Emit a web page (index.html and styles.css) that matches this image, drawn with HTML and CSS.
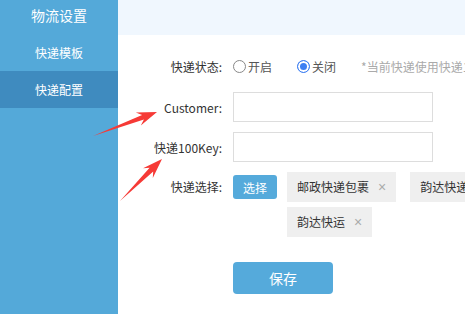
FILE: index.html
```html
<!DOCTYPE html>
<html lang="zh-CN">
<head>
    <meta charset="UTF-8">
    <meta name="viewport" content="width=device-width, initial-scale=1.0">
    <title>快递配置</title>
    <link rel="stylesheet" href="styles.css">
</head>
<body>

    <div class="page">
        <div class="sidebar">
            <div class="side-title">物流设置</div>
            <div class="side-item">快递模板</div>
            <div class="side-item active">快递配置</div>
        </div>

        <div class="main">
            <div class="topbar"></div>

            <div class="form">
                <div class="row row-status">
                    <span class="label">快递状态:</span>
                    <label class="radio"><span class="circle"></span>开启</label>
                    <label class="radio"><span class="circle checked"></span>关闭</label>
                    <span class="hint">*当前快递使用快递100接口查询物流信息</span>
                </div>

                <div class="row">
                    <span class="label">Customer:</span>
                    <input type="text" class="field">
                </div>

                <div class="row">
                    <span class="label">快递100Key:</span>
                    <input type="text" class="field">
                </div>

                <div class="row row-select">
                    <span class="label">快递选择:</span>
                    <button class="btn-select">选择</button>
                    <div class="tags">
                        <span class="tag">邮政快递包裹<span class="x">×</span></span>
                        <span class="tag">韵达快递<span class="x">×</span></span>
                        <span class="tag">韵达快运<span class="x">×</span></span>
                    </div>
                </div>

                <div class="save-row">
                    <button class="btn-save">保存</button>
                </div>
            </div>
        </div>
    </div>

    <!-- 标注箭头 -->
    <svg class="arrows" width="465" height="314" viewBox="0 0 465 314">
        <polygon points="93,136 142.1,115 135.8,112.4 157,112 140.8,125.6 143.9,119.6" fill="#f63a36"/>
        <polygon points="120,201 149.6,167.8 143,168.2 162,159 152.8,178 153.2,171.4" fill="#f63a36"/>
    </svg>

</body>
</html>
```

FILE: styles.css
```css
* {
    margin: 0;
    padding: 0;
    box-sizing: border-box;
}

body {
    font-family: "Noto Sans CJK SC", "Noto Sans", sans-serif;
    font-size: 12px;
    color: #333;
    width: 465px;
    height: 314px;
    overflow: hidden;
    position: relative;
    background-color: #fff;
}

.page {
    display: flex;
    height: 314px;
}

/* 左侧菜单 */
.sidebar {
    width: 118px;
    flex-shrink: 0;
    background-color: #54a9d9;
    color: #fff;
}

.side-title {
    height: 30px;
    line-height: 30px;
    text-align: center;
    font-size: 14px;
    margin-bottom: 4px;
}

.side-item {
    height: 37px;
    line-height: 37px;
    text-align: center;
}

.side-item.active {
    background-color: #3f8bbf;
}

/* 右侧内容 */
.main {
    flex: 1;
    min-width: 0;
    overflow: hidden;
}

.topbar {
    height: 35px;
    background-color: #f0f7fe;
}

.form {
    padding-top: 19px;
}

.row {
    display: flex;
    align-items: center;
    margin-bottom: 10px;
    white-space: nowrap;
}

.row-status {
    height: 24px;
    margin-bottom: 14px;
}

.label {
    width: 104px;
    flex-shrink: 0;
    text-align: right;
    margin-right: 11px;
}

.radio {
    display: inline-flex;
    align-items: center;
    color: #555;
    margin-right: 25px;
}

.circle {
    width: 13px;
    height: 13px;
    border: 1px solid #888;
    border-radius: 50%;
    margin-right: 2px;
}

.circle.checked {
    border-color: #3d7ff2;
    background-color: #3d7ff2;
    box-shadow: inset 0 0 0 2px #fff;
}

.hint {
    color: #aaa;
}

.field {
    width: 200px;
    height: 30px;
    border: 1px solid #ddd;
    outline: none;
}

.row-select {
    align-items: flex-start;
}

.row-select .label {
    line-height: 30px;
}

.btn-select {
    background-color: #55aadb;
    color: #fff;
    border: none;
    border-radius: 3px;
    width: 44px;
    height: 24px;
    margin-top: 3px;
    margin-right: 10px;
    font-family: inherit;
    font-size: 12px;
    flex-shrink: 0;
}

.tags {
    display: flex;
    flex-wrap: wrap;
    gap: 5px 14px;
    width: 230px;
    flex-shrink: 0;
}

.tag {
    height: 30px;
    line-height: 30px;
    padding: 0 10px;
    background-color: #efefef;
}

.tag .x {
    font-family: "Liberation Sans", Arial, sans-serif;
    font-size: 14px;
    color: #aaa;
    margin-left: 9px;
}

.save-row {
    padding-left: 115px;
    margin-top: 25px;
}

.btn-save {
    width: 100px;
    height: 32px;
    background-color: #55aadb;
    color: #fff;
    border: none;
    border-radius: 4px;
    font-family: inherit;
    font-size: 14px;
}

.arrows {
    position: absolute;
    left: 0;
    top: 0;
    pointer-events: none;
}
```
